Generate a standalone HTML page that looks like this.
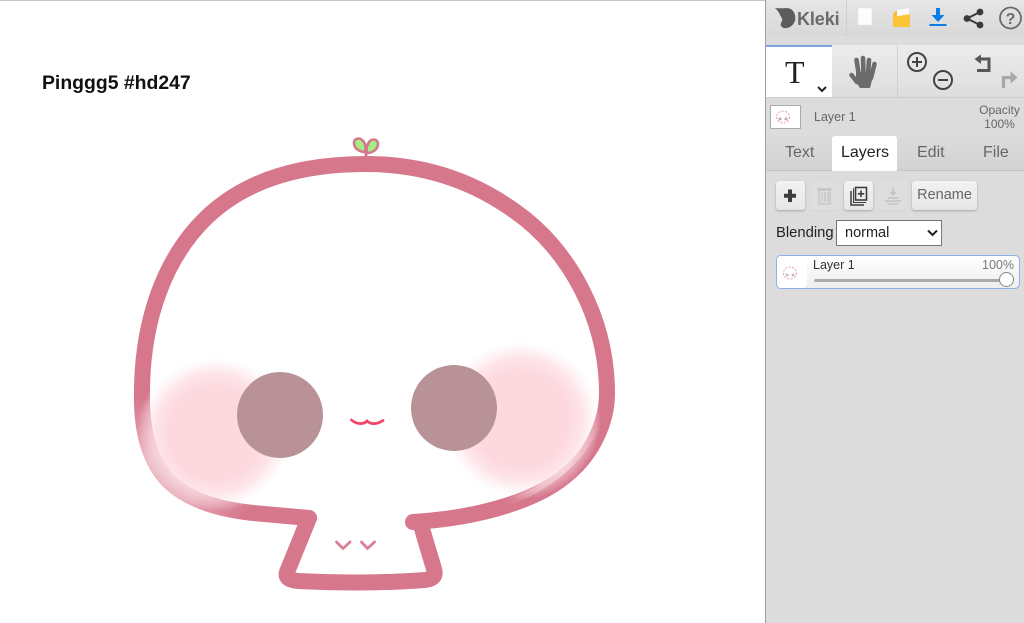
<!DOCTYPE html>
<html><head><meta charset="utf-8"><style>
html,body{margin:0;padding:0;width:1024px;height:623px;overflow:hidden;background:#fff;font-family:"Liberation Sans",sans-serif}
#w{position:absolute;left:0;top:0;width:1024px;height:623px;filter:blur(.35px)}
.a{position:absolute}
#p{position:absolute;left:765px;top:0;width:259px;height:623px;background:#dcdcdc;border-left:1px solid #a0a0a0;box-sizing:border-box}
.t{position:absolute;white-space:nowrap}
.b{position:absolute;top:181px;height:29px;border-radius:3px;background:linear-gradient(#f2f2f2,#e6e6e6);box-shadow:0 1px 2px rgba(0,0,0,.25);box-sizing:border-box}
.d{opacity:.45;box-shadow:0 1px 1px rgba(0,0,0,.1);background:#e2e2e2}
</style></head><body><div id="w">
<div class="a" style="left:0;top:0;width:765px;height:1px;background:#c4c4c4"></div>
<div class="t" style="left:42px;top:71px;font-size:19.4px;font-weight:bold;color:#111;line-height:24px">Pinggg5 #hd247</div>

<svg class="a" style="left:0;top:0" width="765" height="623" viewBox="0 0 765 623">
<defs>
<radialGradient id="bl"><stop offset="0" stop-color="#fdd8de"/><stop offset=".58" stop-color="#fdd8de"/><stop offset=".76" stop-color="#fddde3" stop-opacity=".8"/><stop offset=".9" stop-color="#fde8ec" stop-opacity=".35"/><stop offset="1" stop-color="#fff" stop-opacity="0"/></radialGradient>
<linearGradient id="fl" gradientUnits="userSpaceOnUse" x1="138" y1="395" x2="245" y2="515"><stop offset="0" stop-color="#f9e0e5" stop-opacity="0"/><stop offset=".35" stop-color="#f9e0e5" stop-opacity=".55"/><stop offset=".7" stop-color="#f9e0e5" stop-opacity=".45"/><stop offset="1" stop-color="#f9e0e5" stop-opacity="0"/></linearGradient>
<linearGradient id="fr" gradientUnits="userSpaceOnUse" x1="600" y1="415" x2="505" y2="505"><stop offset="0" stop-color="#f9dfe4" stop-opacity="0"/><stop offset=".5" stop-color="#f9dfe4" stop-opacity=".7"/><stop offset="1" stop-color="#f9dfe4" stop-opacity="0"/></linearGradient>
</defs>
<g fill="none" stroke="#d6778c" stroke-width="16" stroke-linecap="round" stroke-linejoin="round">
<path d="M309 518L253 513C225 510 197 503 177 488C152 470 141 435 142 393C142 320 165 257 207 217C250 176 310 164 366 164C422 164 472 180 516 212C570 250 607 320 607 393C607 425 590 455 570 472C540 500 480 518 413 522"/>
<path d="M309 518L287 572C285 578 290 580 298 581C340 583 385 583 425 580C433 579 436 576 434 569L420 522"/>
</g>
<circle cx="215" cy="433" r="78" fill="url(#bl)"/>
<circle cx="521" cy="419" r="80" fill="url(#bl)"/>
<path d="M142 400C141 435 152 470 177 488C197 503 225 510 253 513" fill="none" stroke="url(#fl)" stroke-width="16"/>
<path d="M600 410C598 430 585 452 564 470C545 487 525 497 505 504" fill="none" stroke="url(#fr)" stroke-width="6"/>
<circle cx="280" cy="415" r="43" fill="#b99298"/>
<circle cx="454" cy="408" r="43" fill="#b99298"/>
<path d="M351.500 420C356 424 363 425 367 421C371 425 378 424 383 420.500" fill="none" stroke="#f0466a" stroke-width="2.800" stroke-linecap="round"/>
<path d="M336.500 542L343 548.500L350 542M361.500 542L367.500 548.500L374.500 542" fill="none" stroke="#dc7f95" stroke-width="2.800" stroke-linecap="round" stroke-linejoin="round"/>
<path d="M366 158V149" stroke="#d6778c" stroke-width="2.800"/>
<path d="M365 152C359 152 354 148 354 143C354 138 360 137 363 141C366 144 366 148 365 152Z" fill="#a4ee88" stroke="#d6778c" stroke-width="2.600"/>
<path d="M367 153C373 153 378 149 378 144C378 139 372 138 369 142C367 145 366 149 367 153Z" fill="#a4ee88" stroke="#d6778c" stroke-width="2.600"/>
</svg>

<div id="p"></div>
<!-- top bar -->
<div class="a" style="left:766px;top:0;width:258px;height:36px;background:linear-gradient(#e6e6e6,#d8d8d8);border-bottom:1px solid #c2c2c2"></div>
<div class="a" style="left:846px;top:1px;width:1px;height:35px;background:#cfcfcf"></div>
<svg class="a" style="left:766px;top:0" width="258" height="98" viewBox="766 0 258 98">
<path d="M775 8C782 9 787 7 791 9C795 12 796 17 795 21C793 26 788 29 784 28C780 27 780 24 782 21C783 19 781 17 780 15C779 12 777 10 775 8Z" fill="#5c5c5c"/>
<rect x="858" y="8" width="14" height="17" fill="#fdfdfd" stroke="#e4e4e4" stroke-width=".6"/>
<path d="M893 14L896 11H899V27H893Z" fill="#f9bf2d"/><path d="M897 10L909 8V17H897Z" fill="#fbfbfb"/><path d="M893 17L910 14V27H893Z" fill="#fbc535"/>
<path d="M938 8V19" stroke="#0a7de8" stroke-width="4"/><path d="M931.500 15H944.500L938 22Z" fill="#0a7de8"/><rect x="929.500" y="24" width="17" height="2" fill="#0a7de8"/>
<path d="M980 12L967 18.500L980 25" fill="none" stroke="#3a3a3a" stroke-width="2"/><circle cx="980" cy="12" r="3.400" fill="#3a3a3a"/><circle cx="980" cy="25" r="3.400" fill="#3a3a3a"/><circle cx="967" cy="18.500" r="3.400" fill="#3a3a3a"/>
<circle cx="1010.500" cy="18" r="10.500" fill="none" stroke="#6a6a6a" stroke-width="1.800"/>
<text x="1010.500" y="24" font-family="Liberation Sans" font-size="16" font-weight="bold" fill="#6a6a6a" text-anchor="middle">?</text>
</svg>
<div class="t" style="left:797px;top:8px;font-size:18px;font-weight:bold;color:#6a6a6a;line-height:22px;letter-spacing:-.1px">Kleki</div>
<!-- tool row -->
<div class="a" style="left:766px;top:36px;width:258px;height:8px;background:#dcdcdc"></div>
<div class="a" style="left:766px;top:45px;width:258px;height:52px;background:linear-gradient(#ececec,#dddddd);border-bottom:1px solid #cdcdcd"></div>
<div class="a" style="left:766px;top:45px;width:66px;height:52px;background:#fff;border-top:2px solid #7fa3e0;box-sizing:border-box"></div>
<div class="a" style="left:897px;top:45px;width:1px;height:52px;background:#d0d0d0"></div>
<div class="t" style="left:785px;top:54px;font-family:'Liberation Serif',serif;font-size:32px;color:#222;line-height:36px">T</div>
<svg class="a" style="left:766px;top:44px" width="258" height="54" viewBox="766 44 258 54">
<path d="M818 87L822 91L826 87" fill="none" stroke="#222" stroke-width="2"/>
<g fill="none" stroke="#6c6c6c" stroke-linecap="round" stroke-width="4.600">
<path d="M859 76L856.500 60"/><path d="M863.500 74L863 58"/><path d="M868 75L869 60"/><path d="M871 78L874.500 64"/><path d="M857 82L851.500 75"/>
</g>
<path d="M856 72H873L872 80L870 88H860L856 82Z" fill="#6c6c6c"/>
<g fill="none" stroke="#444" stroke-width="2"><circle cx="917" cy="62" r="9"/><path d="M912 62H922M917 57V67"/><circle cx="943" cy="80" r="9"/><path d="M938 80H948"/></g>
<path d="M979 59H989V70.500H977" fill="none" stroke="#585858" stroke-width="3"/><path d="M981 54.500L974.500 59L981 64Z" fill="#585858"/>
<path d="M1003.500 88V77.500H1012" fill="none" stroke="#a8a8a8" stroke-width="3.200"/><path d="M1010.500 71.500L1017.500 77.500L1010.500 83.500Z" fill="#a8a8a8"/>
</svg>
<!-- layer preview row -->
<div class="a" style="left:770px;top:105px;width:31px;height:24px;background:#fff;border:1px solid #aaa;box-sizing:border-box"></div>
<svg class="a" style="left:771px;top:106px" width="29" height="22" viewBox="0 0 29 22"><ellipse cx="12" cy="11" rx="6.500" ry="6" fill="none" stroke="#e59cac" stroke-width="1" stroke-dasharray="2 1.500"/><circle cx="9" cy="13" r="1.500" fill="#c9a5aa"/><circle cx="15" cy="13" r="1.500" fill="#c9a5aa"/></svg>
<div class="t" style="left:814px;top:110px;font-size:12.500px;color:#666;line-height:14px">Layer 1</div>
<div class="t" style="left:970px;top:104px;width:59px;text-align:center;font-size:12px;color:#666;line-height:13.500px">Opacity<br>100%</div>
<!-- tabs -->
<div class="a" style="left:766px;top:136px;width:258px;height:34px;background:linear-gradient(#dcdcdc,#d2d2d2);border-bottom:1px solid #c4c4c4"></div>
<div class="a" style="left:832px;top:136px;width:65px;height:35px;background:#fff;border-radius:3px 3px 0 0"></div>
<div class="t" style="left:785px;top:144px;font-size:16px;color:#666;line-height:18px">Text</div>
<div class="t" style="left:841px;top:144px;font-size:16px;color:#222;line-height:18px">Layers</div>
<div class="t" style="left:917px;top:144px;font-size:16px;color:#666;line-height:18px">Edit</div>
<div class="t" style="left:983px;top:144px;font-size:16px;color:#666;line-height:18px">File</div>
<!-- buttons -->
<div class="b" style="left:776px;width:29px"></div>
<div class="b d" style="left:810px;width:29px"></div>
<div class="b" style="left:844px;width:29px"></div>
<div class="b d" style="left:878px;width:29px"></div>
<div class="b" style="left:912px;width:65px;font-size:14.500px;color:#666;text-align:center;line-height:29px">Rename</div>
<svg class="a" style="left:776px;top:181px" width="135" height="29" viewBox="776 181 135 29">
<path d="M790 189.500V202M784 195.800H796" stroke="#3c3c3c" stroke-width="4"/>
<g fill="none" stroke="#c2c2c2" stroke-width="1.200"><rect x="819" y="190" width="11" height="14"/><path d="M817 189H832M822 192V202M825 192V202M828 192V202"/></g>
<path d="M851 191V205H864" fill="none" stroke="#3c3c3c" stroke-width="1.500"/><path d="M853.500 188.500V202.500H866" fill="none" stroke="#3c3c3c" stroke-width="1"/><rect x="855.500" y="187.500" width="11" height="12.500" fill="none" stroke="#3c3c3c" stroke-width="1.600"/><path d="M861 190.500V197M857.800 193.800H864.200" stroke="#3c3c3c" stroke-width="1.600"/>
<g fill="none" stroke="#c2c2c2" stroke-width="1.500"><path d="M893 187V194M890.500 192L893 195L895.500 192"/><path d="M888 198H898M885 201H901M888 204H898"/></g>
</svg>
<!-- blending -->
<div class="t" style="left:776px;top:224px;font-size:14.800px;color:#222;line-height:18px">Blending</div>
<div class="a" style="left:836px;top:220px;width:106px;height:26px;background:#fff;border:1px solid #777;box-sizing:border-box;font-size:14.500px;color:#222;line-height:24px;padding-left:8px">normal</div>
<svg class="a" style="left:927px;top:229px" width="11" height="8"><path d="M1 1.500L5.500 6L10 1.500" fill="none" stroke="#222" stroke-width="2"/></svg>
<!-- layer row -->
<div class="a" style="left:776px;top:255px;width:244px;height:34px;background:linear-gradient(#fff,#eeeeee);border:1px solid #8fb0e6;border-radius:5px;box-sizing:border-box"></div>
<div class="a" style="left:777px;top:256px;width:30px;height:32px;background:#fff;border-radius:4px"></div>
<svg class="a" style="left:777px;top:262px" width="30" height="22" viewBox="0 0 30 22"><ellipse cx="13" cy="11" rx="6.500" ry="6" fill="none" stroke="#e59cac" stroke-width="1" stroke-dasharray="2 1.500"/><circle cx="10" cy="13" r="1.500" fill="#d5b6ba"/><circle cx="16" cy="13" r="1.500" fill="#d5b6ba"/></svg>
<div class="t" style="left:813px;top:258px;font-size:12.500px;color:#333;line-height:14px">Layer 1</div>
<div class="t" style="left:982px;top:258px;font-size:12.500px;color:#777;line-height:14px">100%</div>
<div class="a" style="left:814px;top:279px;width:190px;height:3px;background:#aaa;border-radius:2px"></div>
<div class="a" style="left:999px;top:272px;width:15px;height:15px;border-radius:50%;background:#fff;border:1px solid #888;box-sizing:border-box"></div>
</div></body></html>
